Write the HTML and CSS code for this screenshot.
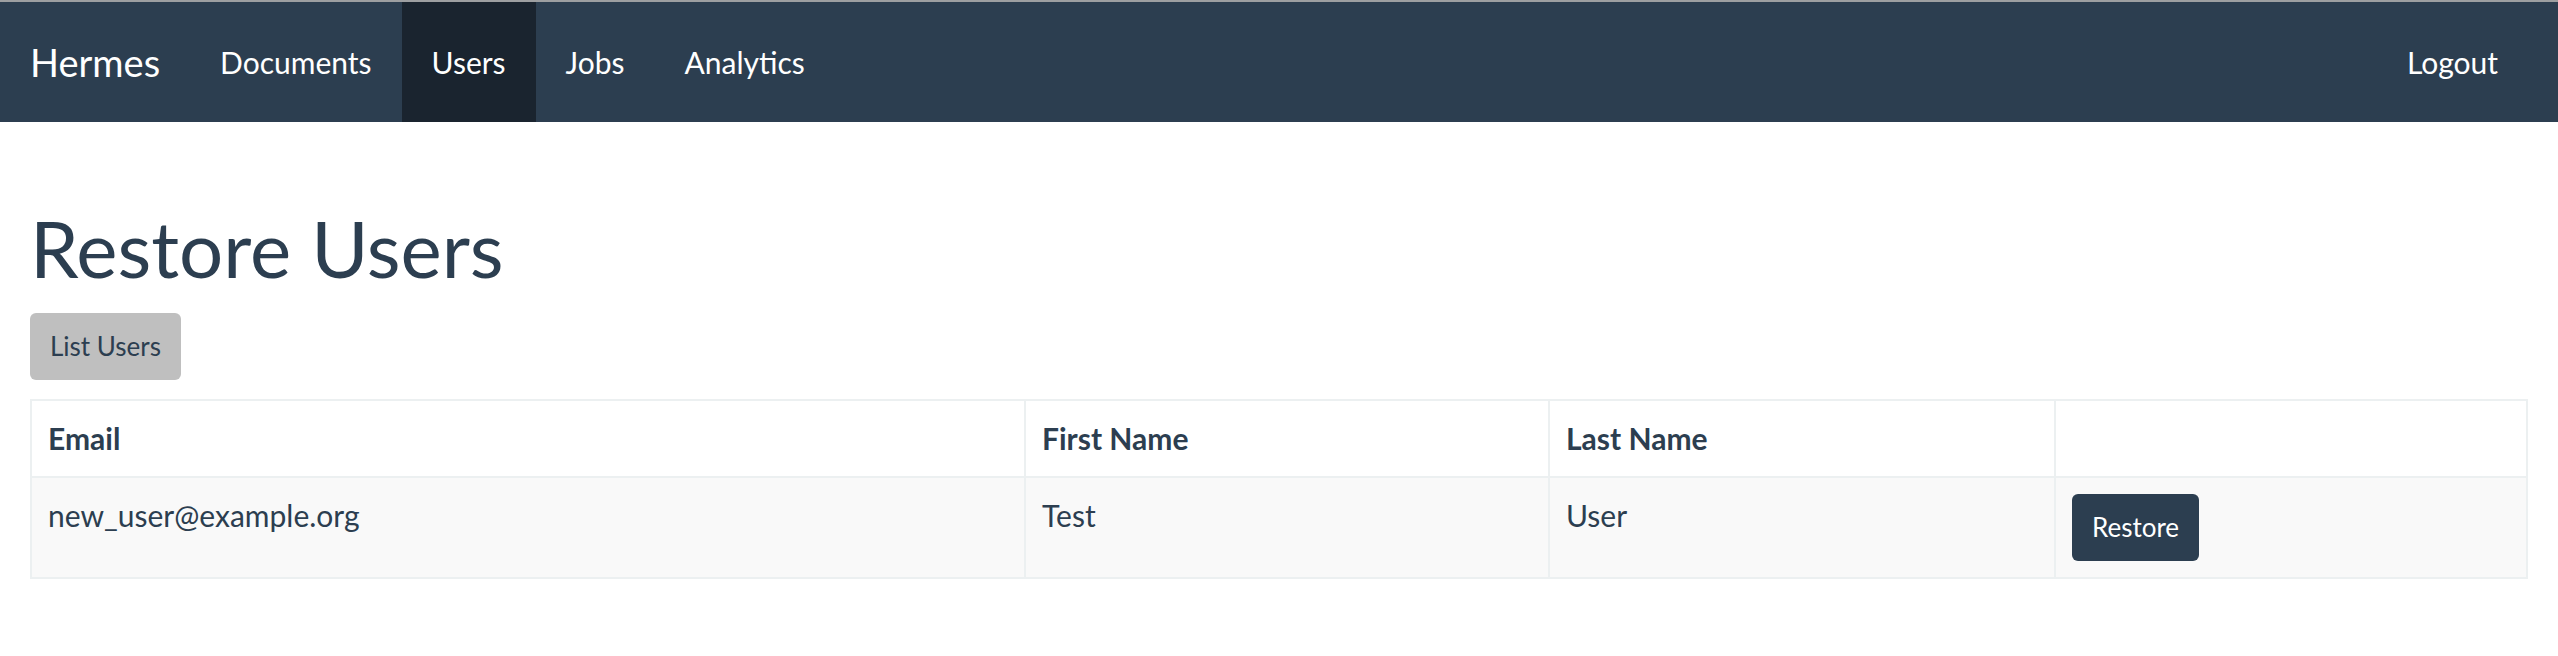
FILE: index.html
```html
<!DOCTYPE html>
<html>
<head>
<meta charset="utf-8">
<title>Hermes - Restore Users</title>
<link rel="stylesheet" href="styles.css">
</head>
<body>
<nav class="navbar">
  <div class="navbar-left">
    <a class="brand" href="#">Hermes</a>
    <ul class="nav">
      <li><a href="#">Documents</a></li>
      <li class="active"><a href="#">Users</a></li>
      <li><a href="#">Jobs</a></li>
      <li><a href="#">Analytics</a></li>
    </ul>
  </div>
  <ul class="nav">
    <li><a href="#">Logout</a></li>
  </ul>
</nav>
<main class="container">
  <h1 class="title">Restore Users</h1>
  <div class="actions">
    <a class="btn btn-light" href="#">List Users</a>
  </div>
  <table class="table">
    <thead>
      <tr>
        <th class="col-email">Email</th>
        <th class="col-first">First Name</th>
        <th class="col-last">Last Name</th>
        <th class="col-action"></th>
      </tr>
    </thead>
    <tbody>
      <tr>
        <td>new_user@example.org</td>
        <td>Test</td>
        <td>User</td>
        <td><a class="btn btn-dark" href="#">Restore</a></td>
      </tr>
    </tbody>
  </table>
</main>
</body>
</html>
```
FILE: styles.css
```css
* { box-sizing: border-box; }

html, body {
  margin: 0;
  padding: 0;
  background: #ffffff;
}

body {
  font-family: Lato, "Open Sans", "Liberation Sans", sans-serif;
  font-size: 30px;
  line-height: 1.42857;
  color: #2c3e50;
}

a { text-decoration: none; }

.navbar {
  display: flex;
  justify-content: space-between;
  align-items: stretch;
  height: 122px;
  background: #2c3e50;
  border-top: 2px solid #9d9fa1;
  margin-bottom: 42px;
  padding-right: 30px;
}

.navbar-left {
  display: flex;
  align-items: stretch;
}

.brand {
  display: block;
  padding: 40px 30px;
  font-size: 38px;
  line-height: 40px;
  color: #ffffff;
}

.nav {
  list-style: none;
  margin: 0;
  padding: 0;
  display: flex;
}

.nav li a {
  display: block;
  padding: 40px 30px;
  font-size: 30px;
  line-height: 40px;
  color: #ffffff;
}

.nav li.active a {
  background: #1a242f;
}

.container {
  display: flow-root;
  padding: 0 30px;
}

.title {
  margin: 42px 0 21px;
  font-size: 78px;
  font-weight: 400;
  line-height: 1.1;
  color: #2c3e50;
}

.actions {
  display: flex;
  margin-bottom: 19px;
}

.btn {
  display: inline-block;
  padding: 12px 18px;
  font-size: 26px;
  line-height: 1.5;
  border: 2px solid transparent;
  border-radius: 6px;
  white-space: nowrap;
}

.btn-light {
  background: #bfbfbf;
  color: #2c3e50;
}

.btn-dark {
  background: #2c3e50;
  color: #ffffff;
}

.table {
  width: 100%;
  border-collapse: collapse;
  border-spacing: 0;
  border: 2px solid #ecf0f1;
  margin-bottom: 42px;
}

.table th,
.table td {
  border: 2px solid #ecf0f1;
  padding: 16px;
  text-align: left;
  line-height: 1.42857;
}

.table th {
  vertical-align: bottom;
  font-weight: 700;
}

.table td {
  vertical-align: top;
}

.table tbody tr {
  background: #f9f9f9;
}

.col-email { width: 994px; }
.col-first { width: 524px; }
.col-last { width: 506px; }
```
